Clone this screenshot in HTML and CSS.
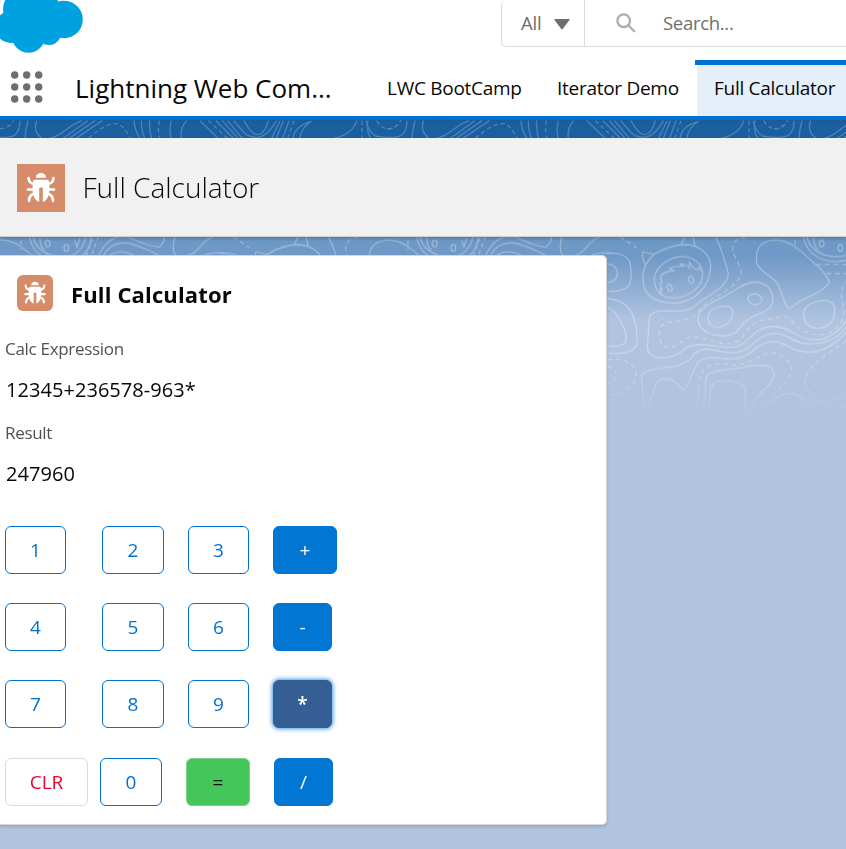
FILE: index.html
```html
<!DOCTYPE html>
<html lang="en">
<head>
<meta charset="utf-8">
<title>Full Calculator</title>
<link rel="stylesheet" href="styles.css">
</head>
<body>
<header class="global">
  <svg class="cloud" viewBox="0 0 84 54" width="84" height="54" fill="#00a1e0"><circle cx="64" cy="19.5" r="18.8"/><circle cx="28.5" cy="36" r="16.7"/><circle cx="11" cy="27" r="16"/><circle cx="49" cy="33" r="12"/><circle cx="22" cy="9" r="19"/><circle cx="43" cy="8" r="16.5"/><circle cx="38" cy="24" r="15"/></svg>
  <div class="search">
    <div class="scope"><span class="t-all">All</span><svg width="16" height="11" viewBox="0 0 16 11"><path d="M1 0h14q1 0 .5 1L8.700 10q-.7 1-1.400 0L.5 1Q0 0 1 0z" fill="#706e6b"/></svg></div>
    <div class="query"><svg width="20" height="20" viewBox="0 0 20 20" fill="none" stroke="#b0adab" stroke-width="2.300" stroke-linecap="round"><circle cx="7.700" cy="7.700" r="6.300"/><path d="M12.500 12.500l5.800 5.800"/></svg><span class="t-search">Search...</span></div>
  </div>
</header>
<nav class="nav">
  <svg class="waffle" width="32" height="32" viewBox="0 0 32 32" fill="#706e6b"><circle cx="3.700" cy="4" r="3.700"/><circle cx="15.700" cy="4" r="3.700"/><circle cx="27.700" cy="4" r="3.700"/><circle cx="3.700" cy="16" r="3.700"/><circle cx="15.700" cy="16" r="3.700"/><circle cx="27.700" cy="16" r="3.700"/><circle cx="3.700" cy="28" r="3.700"/><circle cx="15.700" cy="28" r="3.700"/><circle cx="27.700" cy="28" r="3.700"/></svg>
  <span class="app">Lightning Web Com...</span>
  <a class="tab t-boot">LWC BootCamp</a>
  <a class="tab t-iter">Iterator Demo</a>
  <a class="tab active"><span class="t-full">Full Calculator</span></a>
</nav>
<svg class="strip" width="846" height="18" viewBox="0 18 2538 54" fill="none" stroke="#4a84b9" stroke-width="4">
  <defs><g id="ridge">
    <path d="M110 20Q98 50 125 73M60 20Q60 52 43 64Q20 76-35 66Q-58 50-62 20M84 20Q76 50 75 73M147 73C185 70 200 35 246 20M190 73L263 20M208 73L285 20M228 73L307 20M402 20Q404 50 420 73M424 20Q424 50 434 73M449 20Q447 50 455 73M514 20Q506 50 514 73M560 20Q540 40 544 73M600 20L654 73M648 20L700 73M667 20L714 73M683 20L727 73M701 20C732 55 739 71 771 70Q803 68 829 20M732 20Q755 63 773 62Q795 60 805 20M815 73L840 20M829 73L850 20M848 73L867 20M879 73Q884 35 935 22M899 73Q905 40 932 24M1070 20Q1058 62 1000 73M1104 20Q1098 50 1112 73"/>
    <path stroke-dasharray="13 9" d="M265 73Q320 25 350 29Q370 32 390 73M478 20Q472 50 480 73M625 20L682 73M882 20L863 73M1086 20V73M1130 20Q1145 45 1168 45Q1190 44 1202 20M0 44Q25 44 41 20"/>
  </g></defs>
  <use href="#ridge"/><use href="#ridge" x="1161"/><use href="#ridge" x="2322"/>
</svg>
<section class="page-head">
  <svg class="page-icon" width="48" height="48" viewBox="0 0 48 48"><g id="bug"><path fill="#fff" d="M24 9c-3.500 0-5 2.500-5 4.200Q19 13.700 19.500 13.700h9q.5 0 .5-.5C29 11.500 27.500 9 24 9zM17.500 15.700q-1.500 0-1.500 2L15.500 23c0 8 2 13.500 6.700 15V24.500q0-1 1-1h1.600q1 0 1 1V38c4.700-1.500 6.700-7 6.700-15l-.5-5.300q0-2-1.500-2z"/><path fill="none" stroke="#fff" stroke-width="2.700" stroke-linecap="round" stroke-linejoin="round" d="M11.500 14q.3 5 5.500 6M36.500 14q-.3 5-5.500 6M11 25.500h5M37 25.500h-5M12 36.800q0-5 4.500-7M36 36.800q0-5-4.500-7"/></g></svg>
  <h1 class="t-h1">Full Calculator</h1>
</section>
<main class="canvas">
  <svg class="contours" width="846" height="193" viewBox="0 21 2538 579" fill="none" stroke="#fff" stroke-width="3.800">
    <defs>
      <linearGradient id="fade" x1="0" y1="0" x2="0" y2="1"><stop offset="0" stop-color="#fff" stop-opacity=".32"/><stop offset=".6" stop-color="#fff" stop-opacity=".32"/><stop offset=".8" stop-color="#fff" stop-opacity=".2"/><stop offset=".94" stop-color="#fff" stop-opacity="0"/></linearGradient>
      <mask id="m" maskUnits="userSpaceOnUse" x="0" y="21" width="2538" height="579" style="mask-type:alpha"><rect x="0" y="21" width="2538" height="579" fill="url(#fade)" stroke="none"/></mask>
      <g id="map">
        <path d="M20 70Q70 66 88 92Q98 130 90 160Q80 185 22 184M20 102Q48 100 53 130Q50 157 20 157M22 206Q75 208 96 250Q112 290 112 335Q105 368 60 370H22M22 232Q48 240 67 285Q85 315 76 337Q66 350 22 348"/>
        <path d="M128 65L162 73Q210 44 257 44C300 45 333 75 332 110C330 170 285 214 230 219C180 222 140 203 132 170C124 135 131 100 162 73M128 65Q126 88 137 104M243 44Q252 25 258 20M279 20L286 50M186 196C165 180 161 151 163 142C170 108 205 84 240 80C280 78 305 100 308 130C307 170 280 192 230 203Q205 206 186 196M186 196L180 176L187 179L179 160L186 158L181 138Q195 124 221 122L209 115Q225 107 249 109L241 102Q257 103 269 114L268 97L281 115L290 120L299 112L300 124"/>
        <ellipse cx="209" cy="173" rx="7" ry="11" transform="rotate(-20 209 173)"/><ellipse cx="273" cy="149" rx="7" ry="11" transform="rotate(-20 273 149)"/>
        <path d="M347 20Q370 70 385 130C383 175 320 195 287 226Q255 250 200 242Q150 242 148 265L142 350Q143 382 185 383Q225 385 260 353Q280 341 325 345C390 355 415 360 445 327C490 275 540 285 580 308Q640 345 690 318Q725 300 738 270M470 100C465 55 480 35 520 30C570 28 600 60 635 93Q675 125 688 155C678 185 595 210 583 226Q567 238 560 230C540 188 540 160 515 143Q485 125 470 100M297 250C320 215 372 205 395 186C435 158 475 145 503 170C523 190 520 218 513 230C492 255 450 250 420 293C400 325 350 320 323 308Q285 285 297 250"/>
        <path d="M327 250C335 232 370 225 389 231C405 240 398 270 380 283C360 295 340 295 328 280Q322 265 327 250M443 205Q445 192 465 191Q483 193 486 208Q482 224 463 224Q447 221 443 205M611 245C620 217 660 208 685 213C708 220 710 250 695 275C675 300 640 300 620 282Q610 270 611 245"/>
        <path d="M270 389Q290 354 325 357C390 370 417 378 455 345C500 300 535 305 570 324C630 360 710 335 738 292M128 550C140 500 115 445 128 430C150 410 210 418 244 403Q257 396 270 389M295 396C275 425 265 477 252 478C235 475 235 445 190 446C165 450 165 480 150 509Q145 525 160 550M285 550C340 520 300 455 325 432C350 415 420 420 440 409Q480 402 510 410Q530 425 518 450C500 480 480 480 460 520L440 550M330 550C328 500 325 470 347 455C390 448 410 455 435 470V550M500 530C540 490 570 480 600 500Q635 525 660 555M703 550Q715 530 738 530"/>
        <path d="M295 396Q310 382 345 383C390 388 425 395 465 357C510 320 540 335 580 357Q660 390 738 308"/>
        <path stroke-dasharray="14 11" d="M60 20L110 53M437 22C400 25 395 45 400 72Q415 95 424 125C418 162 380 180 350 200Q315 215 290 252Q255 275 209 276C180 280 180 295 177 310C178 345 195 355 212 352C240 350 255 315 285 321C340 327 400 365 430 317C460 260 510 270 555 258Q580 275 590 290Q630 320 680 312C735 295 735 240 728 220Q718 190 734 155M22 390Q80 380 109 420Q110 460 80 480Q50 494 22 497M22 406Q55 425 50 440Q45 455 22 462M240 550C320 520 285 480 300 440C310 395 370 398 400 405C450 405 490 365 520 369C560 378 578 405 575 425C565 460 510 500 480 545M738 332C700 365 600 410 618 470Q630 500 670 517Q710 515 738 490M650 103H738M680 131H738M585 30V60"/>
        <path d="M611 20Q615 60 655 83Q710 105 755 85Q794 65 795 20M621 20Q630 60 675 75Q735 90 760 60Q775 45 780 20M642 23Q640 50 656 60M761 25L753 51L746 30"/>
        <ellipse cx="665" cy="40" rx="7" ry="10"/><ellipse cx="721" cy="54" rx="7" ry="10"/>
        <path stroke-dasharray="12 10" d="M817 20Q810 40 795 80M800 25L780 80"/>
        <path d="M818 76Q850 10 905 20Q970 50 1000 51Q1018 35 1014 20M832 76Q860 30 910 40Q960 55 998 76M850 76Q885 55 925 76M1047 20Q1035 60 1050 76M1085 76C1120 70 1120 35 1161 20M1135 76Q1160 65 1200 70"/>
      </g>
    </defs>
    <g mask="url(#m)"><use href="#map" x="-522"/><use href="#map" x="639"/><use href="#map" x="1800"/></g>
  </svg>
  <article class="card">
    <div class="card-head"><svg class="card-icon" width="36" height="36" viewBox="0 0 48 48"><use href="#bug"/></svg><h2 class="t-h2">Full Calculator</h2></div>
    <div class="label"><span class="t-expr">Calc Expression</span></div>
    <div class="value"><span class="t-val">12345+236578-963*</span></div>
    <div class="label"><span class="t-res">Result</span></div>
    <div class="value"><span class="t-val2">247960</span></div>
    <div class="keys">
      <button>1</button><button class="w62">2</button><button>3</button><button class="op plus">+</button>
      <button>4</button><button class="w62">5</button><button>6</button><button class="op">-</button>
      <button>7</button><button class="w62">8</button><button>9</button><button class="op focus">*</button>
    </div>
    <div class="last"><button class="clr">CLR</button><button class="w62">0</button><button class="eq">=</button><button class="op">/</button></div>
  </article>
</main>
</body>
</html>
```
FILE: styles.css
```css
* { box-sizing: border-box; }
body { margin: 0; width: 846px; height: 849px; overflow: hidden; background: #fff; color: #080707; font-family: "Open Sans", "Noto Sans", sans-serif; font-weight: 400; display: flex; flex-direction: column; white-space: nowrap; }
h1, h2 { margin: 0; }
svg { display: block; flex: none; }
.global { height: 60px; display: flex; justify-content: space-between; flex: none; }
.search { width: 345px; height: 47px; display: flex; border: 1px solid #dddbda; border-top: 0; border-right: 0; border-radius: 5px 0 0 5px; color: #706e6b; font-size: 18.5px; line-height: 26px; }
.scope { width: 83px; border-right: 1px solid #dddbda; padding: 10px 0 0 19px; display: flex; }
.scope svg { margin: 9px 0 0 11px; }
.t-all { width: 22px; letter-spacing: -.2px; }
.t-search { letter-spacing: -.3px; }
.query { display: flex; padding: 10px 0 0 31px; }
.query svg { margin: 3px 27px 0 0; }
.nav { height: 60px; flex: none; border-bottom: 4px solid #0070d2; display: flex; font-size: 19px; line-height: 56px; }
.waffle { margin: 11px 0 0 11px; width: 32px; }
.app { margin-left: 32px; width: 312px; font-size: 26px; line-height: 57px; }
.tab { width: 170px; letter-spacing: -.28px; }
.t-iter { width: 138px; }
.active { width: 151px; border-top: 5px solid #0070d2; padding-left: 19px; line-height: 46px; background: linear-gradient(90deg, #fff 2px, #e5effa 2px); }
.strip { background: linear-gradient(#1b5c98, #1b5f9e 6px); }
.page-head { height: 99px; flex: none; background: #f1f1f1; border-bottom: 1px solid #d0d0d0; display: flex; padding: 26px 0 0 17px; position: relative; box-shadow: 0 2px 3px rgba(0,0,0,.18); z-index: 1; }
.page-icon, .card-icon { background: #d68b6b; }
.page-head h1 { margin: 2px 0 0 17.5px; font-size: 28px; line-height: 42px; font-weight: 300; }
.canvas { flex: 1; position: relative; background: linear-gradient(#6c98c6 0, #7199c7 20px, #b0c4df 84px); padding-top: 18px; }
.contours { position: absolute; left: 0; top: 0; }
.card { position: relative; width: 607px; height: 570px; background: #fff; border: 1px solid #d8d6d4; border-left: 0; border-radius: 0 5px 5px 0; box-shadow: 0 2px 3px rgba(0,0,0,.13); }
.card-head { display: flex; padding: 19px 0 0 17px; }
.card-icon { border-radius: 6px; }
.card-head h2 { margin-left: 18px; font-size: 22px; line-height: 38px; font-weight: 700; letter-spacing: .15px; height: 36px; }
.label { height: 42px; padding-left: 5px; font-size: 17px; line-height: 42px; margin-top: 17px; color: #51514f; letter-spacing: -.3px; }
.value { height: 42px; padding-left: 6px; font-size: 20px; line-height: 40px; letter-spacing: .05px; }
.value + .label { margin-top: 0; }
.keys { display: grid; grid-template-columns: 97px 86px 85px 64px; grid-template-rows: 77px 77px 78px; padding: 30px 0 0 5px; }
.last { display: flex; padding-left: 5px; }
button { width: 61px; height: 48px; padding: 0; border: 1px solid #0070d2; border-radius: 6px; background: #fff; color: #0070d2; font: 400 19px/46px "Open Sans", "Noto Sans", sans-serif; }
.w62 { width: 62px; }
.op { width: 59px; background: #0176d3; border-color: #0176d3; color: #fff; font-weight: 400; }
.plus { width: 64px; }
.focus { background: #355e95; border-color: #355e95; box-shadow: 0 0 4px 1px #3d9be8; font-weight: 600; }
.clr { width: 83px; margin-right: 12px; border-color: #dddbda; color: #e4072b; }
.eq { width: 64px; margin: 0 24px; background: #45c65a; border-color: #7bd488; color: #080707; }
```
